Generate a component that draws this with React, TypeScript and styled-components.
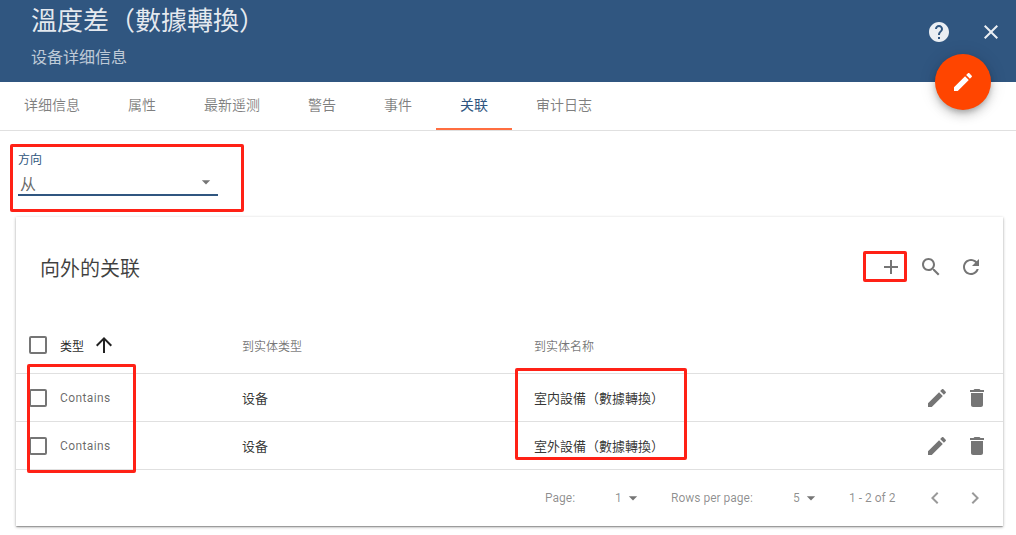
import styled, { createGlobalStyle } from 'styled-components';

const PRIMARY = '#305680';
const FONT = `Roboto, 'Noto Sans CJK SC', 'Noto Sans CJK TC', sans-serif`;

const paths = {
  help: 'M12 2C6.48 2 2 6.48 2 12s4.48 10 10 10 10-4.48 10-10S17.52 2 12 2zm1 17h-2v-2h2v2zm2.07-7.75l-.9.92C13.45 12.9 13 13.5 13 15h-2v-.5c0-1.1.45-2.1 1.17-2.83l1.24-1.26c.37-.36.59-.86.59-1.41 0-1.1-.9-2-2-2s-2 .9-2 2H8c0-2.21 1.79-4 4-4s4 1.79 4 4c0 .88-.36 1.68-.93 2.25z',
  close: 'M19 6.41L17.59 5 12 10.59 6.41 5 5 6.41 10.59 12 5 17.59 6.41 19 12 13.41 17.59 19 19 17.59 13.41 12z',
  edit: 'M3 17.25V21h3.75L17.81 9.94l-3.75-3.75L3 17.25zM20.71 7.04c.39-.39.39-1.02 0-1.41l-2.34-2.34c-.39-.39-1.02-.39-1.41 0l-1.83 1.83 3.75 3.75 1.83-1.83z',
  trash: 'M6 19c0 1.1.9 2 2 2h8c1.1 0 2-.9 2-2V7H6v12zM19 4h-3.5l-1-1h-5l-1 1H5v2h14V4z',
  add: 'M19 13h-6v6h-2v-6H5v-2h6V5h2v6h6v2z',
  search: 'M15.5 14h-.79l-.28-.27C15.41 12.59 16 11.11 16 9.5 16 5.91 13.09 3 9.5 3S3 5.91 3 9.5 5.91 16 9.5 16c1.61 0 3.09-.59 4.23-1.57l.27.28v.79l5 4.99L20.49 19l-4.99-5zm-6 0C7.01 14 5 11.99 5 9.5S7.01 5 9.5 5 14 7.01 14 9.5 11.99 14 9.5 14z',
  refresh: 'M17.65 6.35C16.2 4.9 14.21 4 12 4c-4.42 0-7.99 3.58-7.99 8s3.57 8 7.99 8c3.73 0 6.84-2.55 7.73-6h-2.08c-.82 2.33-3.04 4-5.65 4-3.31 0-6-2.69-6-6s2.69-6 6-6c1.66 0 3.14.69 4.22 1.78L13 11h7V4l-2.35 2.35z',
  arrowUp: 'M4 12l1.41 1.41L11 7.83V20h2V7.83l5.58 5.59L20 12l-8-8-8 8z',
  left: 'M15.41 7.41L14 6l-6 6 6 6 1.41-1.41L10.83 12z',
  right: 'M10 6L8.59 7.41 13.17 12l-4.58 4.59L10 18l6-6z',
  drop: 'M7 10l5 5 5-5z',
};

const GlobalStyle = createGlobalStyle`
  html, body {
    margin: 0;
    height: 100%;
    overflow: hidden;
    background: #fff;
    font-family: ${FONT};
  }
`;

const Svg = styled.svg<{ $color?: string }>`
  display: block;
  flex: none;
  fill: ${({ $color }) => $color ?? 'rgba(0, 0, 0, 0.54)'};
`;

const Icon = ({ d, size = 24, color }: { d: string; size?: number; color?: string }) => (
  <Svg $color={color} width={size} height={size} viewBox="0 0 24 24">
    <path d={d} />
  </Svg>
);

const Page = styled.div`
  position: relative;
  width: 1016px;
  height: 535px;
  overflow: hidden;
`;

const Header = styled.header`
  display: flex;
  justify-content: space-between;
  height: 82px;
  padding-left: 31px;
  box-sizing: border-box;
  background: ${PRIMARY};
  color: #fff;
`;

const Title = styled.h1`
  margin: 5px 0 11px;
  font-size: 26px;
  line-height: 32px;
  font-weight: 400;
  color: rgba(255, 255, 255, 0.88);
`;

const Subtitle = styled.div`
  font-size: 16px;
  line-height: 20px;
  color: rgba(255, 255, 255, 0.7);
`;

const HeaderActions = styled.div`
  display: flex;
  gap: 28px;
  padding: 20px 13px 0 0;
  height: 24px;
`;

const Fab = styled.button`
  position: absolute;
  left: 935px;
  top: 54px;
  width: 56px;
  height: 56px;
  padding: 0;
  border: 0;
  border-radius: 50%;
  background: #ff4500;
  display: flex;
  align-items: center;
  justify-content: center;
  box-shadow: 0 3px 5px -1px rgba(0, 0, 0, 0.2), 0 6px 10px rgba(0, 0, 0, 0.14), 0 1px 18px rgba(0, 0, 0, 0.12);
`;

const Tabs = styled.nav`
  display: flex;
  height: 49px;
  box-sizing: border-box;
  border-bottom: 1px solid #e0e0e0;
`;

const Tab = styled.div<{ $active?: boolean }>`
  height: 48px;
  padding: 0 24px 2px;
  box-sizing: border-box;
  display: flex;
  align-items: center;
  font-size: 14px;
  color: ${({ $active }) => ($active ? PRIMARY : 'rgba(0, 0, 0, 0.5)')};
  border-bottom: 2px solid ${({ $active }) => ($active ? '#ff6e40' : 'transparent')};
`;

const Filter = styled.div`
  width: 200px;
  height: 86px;
  margin-left: 18px;
  padding-top: 21px;
  box-sizing: border-box;
`;

const FilterLabel = styled.div`
  font-size: 12px;
  line-height: 16px;
  color: ${PRIMARY};
`;

const FilterValue = styled.div`
  display: flex;
  justify-content: space-between;
  align-items: flex-start;
  height: 21px;
  margin-top: -1px;
  padding: 6px 2px 0;
  font-size: 16px;
  line-height: 24px;
  color: rgba(0, 0, 0, 0.6);
  border-bottom: 2px solid ${PRIMARY};
`;

const FilterArrow = styled.span`
  margin-top: -1px;
`;

const Card = styled.section`
  width: 987px;
  height: 309px;
  margin-left: 16px;
  background: #fff;
  box-shadow: 0 1px 3px rgba(0, 0, 0, 0.3), 0 1px 1px rgba(0, 0, 0, 0.14), 0 2px 1px -1px rgba(0, 0, 0, 0.12);
`;

const CardHead = styled.div`
  display: flex;
  align-items: center;
  justify-content: space-between;
  height: 100px;
  padding: 0 20px 0 24px;
  box-sizing: border-box;
`;

const CardTitle = styled.h2`
  margin: 0;
  font-size: 20px;
  font-weight: 400;
  color: rgba(0, 0, 0, 0.75);
`;

const CardTools = styled.div`
  display: flex;
  gap: 16px;
`;

const Row = styled.div<{ $head?: boolean }>`
  display: grid;
  grid-template-columns: 226px 292px 1fr 78px;
  align-items: center;
  height: ${({ $head }) => ($head ? '57px' : '48px')};
  box-sizing: border-box;
  border-bottom: 1px solid #e0e0e0;
  font-size: 13px;
  color: rgba(0, 0, 0, 0.8);
`;

const TypeCell = styled.div`
  display: flex;
  align-items: center;
  padding-left: 13px;
`;

const Check = styled.span`
  width: 18px;
  height: 18px;
  margin-right: 13px;
  box-sizing: border-box;
  border: 2px solid rgba(0, 0, 0, 0.54);
  border-radius: 2px;
`;

const HeadName = styled.span`
  font-size: 12px;
  color: rgba(0, 0, 0, 0.87);
  margin-right: 8px;
`;

const HeadCell = styled.div`
  font-size: 12px;
  color: rgba(0, 0, 0, 0.54);
`;

const TypeText = styled.span`
  font-size: 12px;
  letter-spacing: 0.4px;
  color: rgba(0, 0, 0, 0.6);
`;

const RowActions = styled.div`
  display: flex;
  gap: 16px;
`;

const Paginator = styled.div`
  display: flex;
  align-items: center;
  height: 56px;
  padding-left: 529px;
  font-size: 12px;
  color: rgba(0, 0, 0, 0.45);
`;

const PageLabel = styled.span<{ $width: number }>`
  width: ${({ $width }) => $width}px;
`;

const PageSelect = styled.span`
  display: flex;
  align-items: center;
  gap: 1px;
  width: 28px;
  margin-right: 28px;
`;

const PageRange = styled.span`
  width: 74px;
`;

const PageNav = styled.div`
  display: flex;
  gap: 16px;
`;

const Annotation = styled.div<{ $x: number; $y: number; $w: number; $h: number }>`
  position: absolute;
  left: ${({ $x }) => $x}px;
  top: ${({ $y }) => $y}px;
  width: ${({ $w }) => $w}px;
  height: ${({ $h }) => $h}px;
  box-sizing: border-box;
  border: 3px solid #ff2116;
  border-radius: 2px;
`;

const tabs = ['详细信息', '属性', '最新遥测', '警告', '事件', '关联', '审计日志'];
const rows = [
  { id: 1, name: '室内設備（數據轉換）' },
  { id: 2, name: '室外設備（數據轉換）' },
];

export default function App() {
  return (
    <Page>
      <GlobalStyle />
      <Header>
        <div>
          <Title>溫度差（數據轉換）</Title>
          <Subtitle>设备详细信息</Subtitle>
        </div>
        <HeaderActions>
          <Icon d={paths.help} color="rgba(255,255,255,0.9)" />
          <Icon d={paths.close} color="rgba(255,255,255,0.9)" />
        </HeaderActions>
      </Header>
      <Fab>
        <Icon d={paths.edit} color="#fff" />
      </Fab>
      <Tabs>
        {tabs.map((t) => (
          <Tab key={t} $active={t === '关联'}>
            {t}
          </Tab>
        ))}
      </Tabs>
      <Filter>
        <FilterLabel>方向</FilterLabel>
        <FilterValue>
          从
          <FilterArrow>
            <Icon d={paths.drop} size={20} />
          </FilterArrow>
        </FilterValue>
      </Filter>
      <Card>
        <CardHead>
          <CardTitle>向外的关联</CardTitle>
          <CardTools>
            <Icon d={paths.add} />
            <Icon d={paths.search} />
            <Icon d={paths.refresh} />
          </CardTools>
        </CardHead>
        <Row $head>
          <TypeCell>
            <Check />
            <HeadName>类型</HeadName>
            <Icon d={paths.arrowUp} color="rgba(0,0,0,0.87)" />
          </TypeCell>
          <HeadCell>到实体类型</HeadCell>
          <HeadCell>到实体名称</HeadCell>
        </Row>
        {rows.map((r) => (
          <Row key={r.id}>
            <TypeCell>
              <Check />
              <TypeText>Contains</TypeText>
            </TypeCell>
            <div>设备</div>
            <div>{r.name}</div>
            <RowActions>
              <Icon d={paths.edit} />
              <Icon d={paths.trash} />
            </RowActions>
          </Row>
        ))}
        <Paginator>
          <PageLabel $width={70}>Page:</PageLabel>
          <PageSelect>
            1
            <Icon d={paths.drop} size={20} />
          </PageSelect>
          <PageLabel $width={122}>Rows per page:</PageLabel>
          <PageSelect>
            5
            <Icon d={paths.drop} size={20} />
          </PageSelect>
          <PageRange>1 - 2 of 2</PageRange>
          <PageNav>
            <Icon d={paths.left} color="rgba(0,0,0,0.4)" />
            <Icon d={paths.right} color="rgba(0,0,0,0.4)" />
          </PageNav>
        </Paginator>
      </Card>
      <Annotation $x={10} $y={144} $w={234} $h={68} />
      <Annotation $x={863} $y={251} $w={44} $h={31} />
      <Annotation $x={27} $y={364} $w={109} $h={109} />
      <Annotation $x={515} $y={368} $w={172} $h={92} />
    </Page>
  );
}
